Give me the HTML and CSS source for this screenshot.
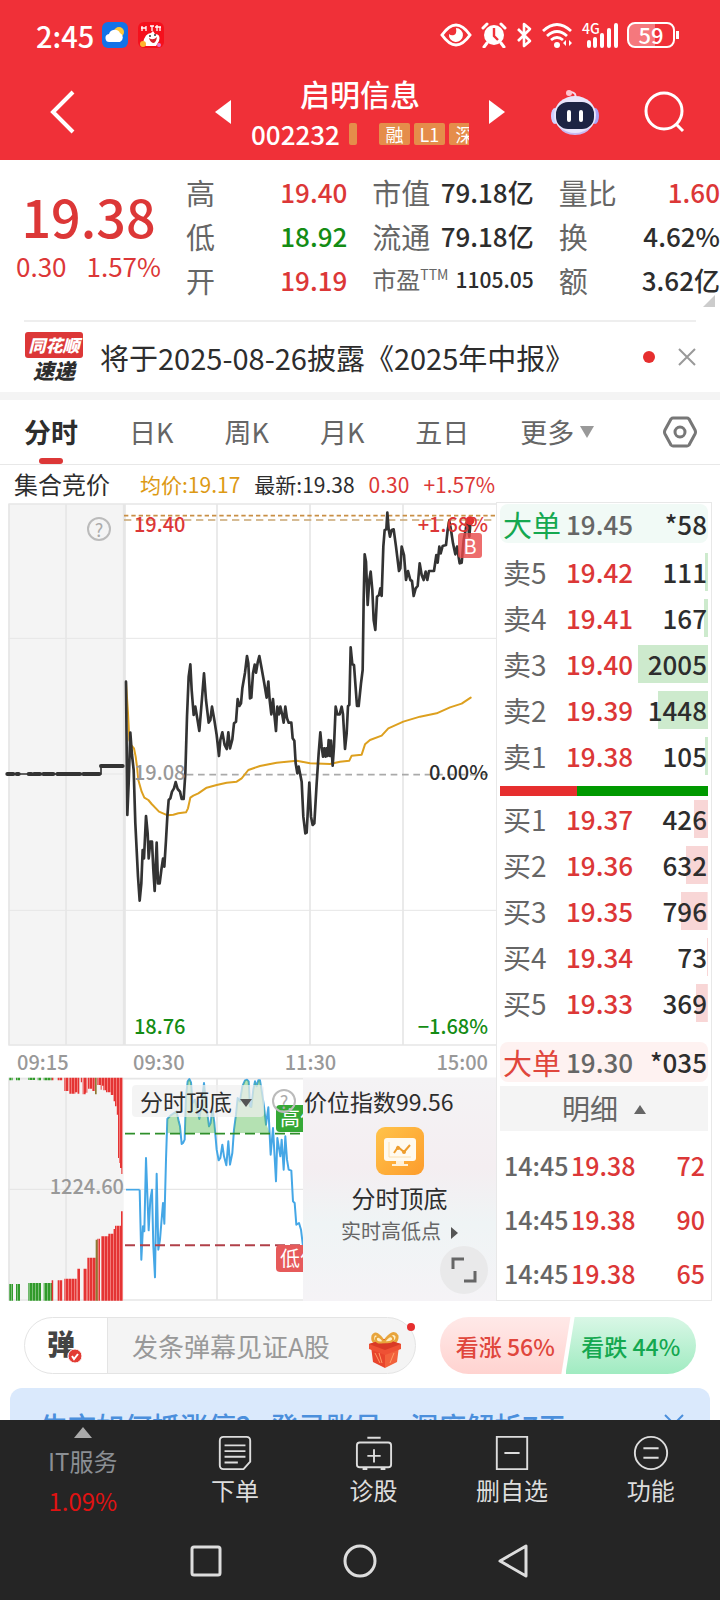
FILE: index.html
```html
<!DOCTYPE html>
<html lang="zh-CN">
<head>
    <meta charset="UTF-8">
    <meta name="viewport" content="width=device-width, initial-scale=1.0">
    <title>启明信息 002232</title>
    <link rel="stylesheet" href="styles.css">
</head>

<body>
    <div class="content">
        <div class="statusbar">
            <span class="clock">2:45</span>
            <svg class="app_icon" viewBox="0 0 26 26">
                <rect width="26" height="26" rx="6" fill="#1372e8"/>
                <circle cx="17" cy="10" r="5" fill="#ffc83a"/>
                <path d="M8 20a4 4 0 0 1-1-8 6 6 0 0 1 11-1 5 5 0 0 1 0 9z" fill="#fff"/>
            </svg>
            <svg class="app_icon" viewBox="0 0 26 26">
                <rect width="26" height="26" rx="6" fill="#f5101c"/>
                <path d="M4 4v5M3 6h5M8 4v5M12 4h4M14 4v5M19 3v6M17 5h6M22 5v4" stroke="#fff" stroke-width="1.3" fill="none"/>
                <path d="M5 21q2-10 8-10l2-2 2 3q6 0 4 7l-3 5H8z" fill="#fff"/>
                <path d="M11 16q4 3 8-1-1 6-4 6-3-1-4-5z" fill="#d3202b"/>
                <circle cx="12" cy="14" r="1" fill="#333"/><circle cx="17" cy="13" r="1" fill="#333"/>
                <circle cx="5" cy="22" r="3" fill="#ffb52e"/><circle cx="21" cy="23" r="2" fill="#e37ad0"/>
            </svg>
            <div class="status_icons">
                <svg width="32" height="24" viewBox="0 0 32 24">
                    <path d="M2 12Q16-8 30 12 16 32 2 12z" fill="none" stroke="#fff" stroke-width="3"/>
                    <path d="M16 5a7 7 0 1 1-7 6q2 2 5 1t2-7z" fill="#fff"/>
                </svg>
                <svg width="26" height="26" viewBox="0 0 26 26">
                    <circle cx="13" cy="13" r="10" fill="#fff"/>
                    <path d="M2 6l4-4M24 6l-4-4M6 21l-3 4M20 21l3 4" stroke="#fff" stroke-width="3" stroke-linecap="round"/>
                    <path d="M13 6v8l4 4" fill="none" stroke="#f03038" stroke-width="2.4"/>
                </svg>
                <svg width="16" height="26" viewBox="0 0 16 26">
                    <path d="M2 7l12 12-6 5V2l6 5L2 19" fill="none" stroke="#fff" stroke-width="2.6" stroke-linejoin="round"/>
                </svg>
                <svg width="32" height="26" viewBox="0 0 32 26">
                    <path d="M2 9q14-13 28 0M6 14q10-9 20 0M10 18q6-5 12 0" fill="none" stroke="#fff" stroke-width="2.8"/>
                    <circle cx="16" cy="23" r="3" fill="#fff"/>
                    <path d="M25 18v6l-3-3zM28 18v6l3-3z" fill="#fff"/>
                </svg>
                <div class="signal">
                    <span>4G</span>
                    <svg width="31" height="26" viewBox="0 0 31 26">
                        <path d="M2 20v4M8 17v7M15 13v11M22 8v16M29 3v21" stroke="#fff" stroke-width="4" stroke-linecap="round"/>
                    </svg>
                </div>
                <span class="battery">59</span>
            </div>
        </div>

        <header class="header">
            <button class="back" aria-label="返回">
                <svg width="26" height="44" viewBox="0 0 26 44"><path d="M23 2L3 22l20 20" fill="none" stroke="#fff" stroke-width="4"/></svg>
            </button>
            <div class="stock">
                <button aria-label="上一只"><svg width="16" height="24" viewBox="0 0 16 24"><path d="M16 0v24L0 12z" fill="#fff"/></svg></button>
                <div class="stock_name">
                    <h1>启明信息</h1>
                    <div class="code">
                        <span>002232</span>
                        <div class="tags">
                            <i class="tag_end"></i>
                            <i class="tag">融</i><i class="tag">L1</i><i class="tag">深</i>
                        </div>
                    </div>
                </div>
                <button aria-label="下一只"><svg width="16" height="24" viewBox="0 0 16 24"><path d="M0 0v24l16-12z" fill="#fff"/></svg></button>
            </div>
            <div class="header_right">
                <button aria-label="智能助手">
                    <svg width="48" height="46" viewBox="0 0 48 46">
                        <path d="M24 9q2-5-4-6" fill="none" stroke="#f4d9ee" stroke-width="2"/>
                        <circle cx="18" cy="4" r="3" fill="#ffc4cf"/>
                        <ellipse cx="4" cy="27" rx="4" ry="8" fill="#cfd0ff"/>
                        <ellipse cx="44" cy="27" rx="4" ry="8" fill="#a9a4f5"/>
                        <ellipse cx="24" cy="26" rx="21" ry="19" fill="#e9e6fb"/>
                        <path d="M8 38q16 12 32 0-5 8-16 8T8 38z" fill="#c8b9f2"/>
                        <rect x="5" y="13" width="38" height="27" rx="12" fill="#1d2444"/>
                        <path d="M18 23v8M30 23v8" stroke="#fff" stroke-width="4" stroke-linecap="round"/>
                    </svg>
                </button>
                <button aria-label="搜索">
                    <svg width="42" height="42" viewBox="0 0 42 42">
                        <circle cx="21" cy="20" r="18" fill="none" stroke="#fff" stroke-width="3"/>
                        <path d="M33 33l7 7" stroke="#fff" stroke-width="3"/>
                    </svg>
                </button>
            </div>
        </header>

        <section class="quote">
            <div class="price">
                <strong>19.38</strong>
                <div><span>0.30</span><span>1.57%</span></div>
            </div>
            <dl>
                <div><dt>高</dt><dd class="red">19.40</dd></div>
                <div><dt>低</dt><dd class="green">18.92</dd></div>
                <div><dt>开</dt><dd class="red">19.19</dd></div>
            </dl>
            <dl>
                <div><dt>市值</dt><dd>79.18亿</dd></div>
                <div><dt>流通</dt><dd>79.18亿</dd></div>
                <div class="small"><dt>市盈<sup>TTM</sup></dt><dd>1105.05</dd></div>
            </dl>
            <dl>
                <div><dt>量比</dt><dd class="red">1.60</dd></div>
                <div><dt>换</dt><dd>4.62%</dd></div>
                <div><dt>额</dt><dd>3.62亿</dd></div>
            </dl>
        </section>

        <section class="news">
            <div class="news_logo"><b>同花顺</b><span>速递</span></div>
            <a href="#">将于2025-08-26披露《2025年中报》</a>
            <i class="news_dot"></i>
            <button aria-label="关闭">
                <svg width="18" height="18" viewBox="0 0 18 18"><path d="M1 1l16 16M17 1L1 17" stroke="#999" stroke-width="2"/></svg>
            </button>
        </section>

        <nav class="tabs">
            <button class="active">分时</button>
            <button>日K</button>
            <button>周K</button>
            <button>月K</button>
            <button>五日</button>
            <button class="more">更多</button>
            <button class="setting" aria-label="设置">
                <svg width="34" height="32" viewBox="0 0 34 32">
                    <path d="M10 2h14q1 0 2 1l6 11q1 2 0 4l-6 11q-1 1-2 1H10q-1 0-2-1L2 18q-1-2 0-4L8 3q1-1 2-1z" fill="none" stroke="#777" stroke-width="3"/>
                    <circle cx="17" cy="16" r="5" fill="none" stroke="#777" stroke-width="3"/>
                </svg>
            </button>
        </nav>

        <main class="main">
            <div class="chart_col">
                <div class="chart_info">
                    <b>集合竞价</b>
                    <span class="gold">均价:19.17</span>
                    <span>最新:19.38</span>
                    <span class="red">0.30</span>
                    <span class="red">+1.57%</span>
                </div>

                <div class="chart">
                    <svg viewBox="0 6 1488 1632" preserveAspectRatio="none">
                        <rect x="25" y="12" width="346" height="1624" fill="#f4f4f4"/>
                        <g stroke="#e6e6e6" stroke-width="5" fill="none">
                            <path d="M25 12H1488M25 1635H1488M27 12V1635M198 12V1635M651 12V1635M930 12V1635M1209 12V1635"/>
                            <path d="M373 12V1635" stroke-width="9"/>
                            <path d="M25 415H1488M25 822H372M25 1231H1488" stroke-width="3"/>
                        </g>
                        <path d="M372 47H1488" stroke="#c98f45" stroke-width="5" stroke-dasharray="13 9"/>
                        <path d="M372 60H1488" stroke="#c9a673" stroke-width="5" stroke-dasharray="22 14"/>
                        <path d="M560 824H1470" stroke="#aaa" stroke-width="5" stroke-dasharray="20 14"/>
                        <!-- 集合竞价 -->
                        <path d="M22 822H303V798H370" fill="none" stroke="#333" stroke-width="5"/>
                        <path d="M22 822H40M50 822H56M86 822H94M102 822H120M130 822H160M172 822H240M250 822H298M303 798H368" stroke="#333" stroke-width="12" stroke-linecap="round"/>
                        <!-- 均价 -->
                        <path d="M378 547L384 640 388 720 393 735 402 745 407 770 411 800 415 840 425 875 433 893 445 900 455 912 477 935 503 946 520 944 535 940 558 937 564 925 571 893 580 887 595 880 620 863 650 855 680 848 710 845 725 835 745 810 780 798 830 788 890 782 930 790 990 792 1020 785 1048 782 1055 767 1085 764 1095 733 1110 720 1145 707 1165 685 1210 665 1260 650 1310 640 1350 622 1385 611 1412 593" fill="none" stroke="#dda01f" stroke-width="6" stroke-linecap="round" stroke-linejoin="round"/>
                        <!-- 分时价 -->
                        <path d="M378 545L382 945 386 850 391 698 396 765 401 810 406 970 414 1130 419 1202 424 1150 428 1050 432 1075 438 948 443 1000 446 1075 451 1025 456 1025 460 1110 464 1173 467 1100 470 1028 474 1150 479 1150 484 1110 489 1076 493 1100 498 1020 502 950 506 900 511 895 516 875 522 865 527 846 533 867 540 875 545 897 551 897 556 820 561 650 566 530 571 493 575 570 581 645 586 620 591 650 598 693 604 620 612 520 618 600 626 668 631 660 636 620 643 660 650 705 657 768 661 720 667 697 674 735 680 747 685 697 690 745 697 718 702 670 708 665 713 597 718 618 723 610 727 565 735 518 741 468 745 490 750 595 754 593 759 520 764 494 768 518 773 488 778 468 784 500 792 545 800 593 805 545 809 600 814 643 819 597 823 643 828 693 832 620 837 643 841 620 847 645 851 668 856 620 861 655 866 668 874 668 878 715 883 722 887 790 892 820 896 800 901 825 905 845 910 950 916 1000 920 998 928 848 933 950 938 975 943 970 950 850 956 760 961 697 965 740 969 770 973 745 977 770 980 745 983 768 986 720 990 768 993 722 998 797 1002 740 1007 620 1012 643 1019 643 1025 620 1029 643 1035 747 1040 700 1044 618 1048 615 1052 442 1057 493 1062 495 1066 550 1071 618 1076 618 1083 550 1088 510 1091 300 1094 163 1098 185 1103 315 1108 240 1112 215 1117 270 1121 360 1126 390 1131 290 1137 285 1141 265 1145 288 1150 140 1154 90 1159 88 1162 38 1166 88 1170 110 1175 90 1181 88 1188 140 1197 213 1201 205 1205 140 1212 165 1218 240 1224 213 1231 240 1236 243 1241 288 1247 265 1253 258 1259 190 1265 225 1271 240 1277 215 1282 240 1287 213 1302 213 1309 165 1313 188 1318 140 1322 160 1328 138 1338 135 1343 90 1348 62 1353 90 1359 130 1366 163 1371 140 1379 190 1385 188 1391 120 1397 90 1402 60 1408 110 1412 60" fill="none" stroke="#333" stroke-width="8" stroke-linecap="round" stroke-linejoin="round"/>
                        <circle cx="1410" cy="62" r="13" fill="#e62e2e"/>
                    </svg>
                    <button class="help chart_help" aria-label="说明">?</button>
                    <span class="label top left red">19.40</span>
                    <span class="label top right red">+1.68%</span>
                    <span class="label mid left grey">19.08</span>
                    <span class="label mid right">0.00%</span>
                    <span class="label bottom left green">18.76</span>
                    <span class="label bottom right green">−1.68%</span>
                    <span class="buy_mark">B</span>
                </div>

                <div class="time_axis">
                    <span>09:15</span>
                    <span>09:30</span>
                    <span>11:30</span>
                    <span>15:00</span>
                </div>

                <div class="sub">
                    <svg viewBox="0 52 1488 672" preserveAspectRatio="none">
                        <defs>
                            <pattern id="redBar" width="9" height="9" patternUnits="userSpaceOnUse"><path d="M0 0h9v9H0z" fill="#f27a78"/><path d="M0 0h6v9H0z" fill="#e43434"/></pattern>
                            <pattern id="greenBar" width="9" height="9" patternUnits="userSpaceOnUse"><path d="M0 0h9v9H0z" fill="#7cc077"/><path d="M0 0h6v9H0z" fill="#319a2b"/></pattern>
                            <clipPath id="above"><path d="M372 52H909V221H372z"/></clipPath>
                            <clipPath id="plot"><path d="M372 52H909V724H372z"/></clipPath>
                        </defs>
                        <rect x="25" y="54" width="346" height="669" fill="#f4f4f4"/>
                        <g stroke="#e6e6e6" stroke-width="5" fill="none">
                            <path d="M25 57H1488M25 721H1488M27 54V721M198 54V721M651 54V721"/>
                            <path d="M25 389H1488" stroke-width="4"/>
                        </g>
                        <path d="M28 54h10v8H28zM48 54h12v8H48zM85 54h20v7H85zM113 54h10v8h-10zM131 54h24v8h-24zM28 673h11v50H28zM48 673h12v50H48zM85 670h38v53H85zM131 670h25v53h-25z" fill="url(#greenBar)"/>
                        <path d="M155 54h6v8h-6zM173 54h14v8h-14zM193 54h13v40h-13zM208 54h30v48h-6v-4h-6v4h-18zM242 54h4v14h-4zM248 54h14v45h-5v5h-9zM264 54h20v40h-8v-7h-12zM292 54H368V343H364V325H360V310H357V295H354V165H350V140H345V125H340V106H332V98H318V92H310V78H306V90H302V76H292z" fill="url(#redBar)"/>
                        <path d="M155 662h5v61h-5zM173 662h14v61h-14zM193 657h37v66h-37zM231 627h9v96h-9zM250 627h11v96h-11zM262 594h26v129h-26zM292 537h8v186h-8zM303 530H325V522H340V508H345V498H363V455H369V723H303z" fill="url(#redBar)"/>
                        <path d="M285 54h5v50h-5zM287 540h6v183h-6z" fill="#8c7a33"/>
                        <g clip-path="url(#plot)">
                            <path d="M419 390L424 600 429 500 433 515 438 295 446 512 451 420 456 390 460 560 465 653 470 342 475 570 480 540 484 490 489 430 493 492 498 300 502 178 512 167 530 155 536 185 540 200 545 253 549 250 554 240 558 110 563 65 568 58 573 68 578 130 585 120 592 150 598 178 605 130 612 70 618 130 627 200 632 190 637 143 643 190 650 270 656 302 661 295 667 255 672 290 679 317 685 245 690 315 697 280 702 210 708 165 713 115 720 125 727 80 735 62 741 60 746 65 750 140 754 142 760 90 765 65 770 80 775 62 780 62 786 100 792 140 798 195 805 143 812 285 819 205 828 365 832 235 841 290 845 240 851 330 856 230 861 300 866 330 874 333 879 425 884 430 889 495 897 490 903 510 909 560" fill="none" stroke="#45a7e6" stroke-width="6" stroke-linejoin="round"/>
                            <path d="M502 221V178L512 167 530 155 536 185 543 221H554L558 110 563 65 568 58 573 68 578 130 585 120 592 150 598 178 605 130 612 70 618 130 627 200 632 190 637 143 643 190 648 221H701L708 165 713 115 720 125 727 80 735 62 741 60 746 65 750 140 754 142 760 90 765 65 770 80 775 62 780 62 786 100 792 140 800 195 809 221z" fill="#58bd55" fill-opacity=".45" clip-path="url(#above)"/>
                        </g>
                        <path d="M378 390H419" stroke="#45a7e6" stroke-width="5"/>
                        <path d="M375 222H909" stroke="#2f8f2b" stroke-width="5" stroke-dasharray="30 15"/>
                        <path d="M375 557H909" stroke="#b04049" stroke-width="6" stroke-dasharray="30 15"/>
                    </svg>
                    <span class="volume">1224.60</span>
                    <span class="flag high">高位</span>
                    <span class="flag low">低位</span>
                    <div class="promo">
                        <svg width="48" height="48" viewBox="0 0 48 48">
                            <defs><linearGradient id="sun" x2="1" y2="1"><stop stop-color="#ffc34a"/><stop offset="1" stop-color="#fd9c2c"/></linearGradient></defs>
                            <rect width="48" height="48" rx="9" fill="url(#sun)"/>
                            <rect x="8" y="11" width="32" height="23" rx="3" fill="#fffaf0"/>
                            <path d="M20 34h8v3h4v2H16v-2h4z" fill="#fff1d8"/>
                            <path d="M13 15v15h22" fill="none" stroke="#fce0b0" stroke-width="1"/>
                            <path d="M18 26l4-6 6 5 6-7" fill="none" stroke="#ee9d2e" stroke-width="2"/>
                            <circle cx="22" cy="21" r="2" fill="#ee9d2e"/><circle cx="28" cy="25" r="2" fill="#ee9d2e"/>
                        </svg>
                        <b>分时顶底</b>
                        <a href="#">实时高低点</a>
                    </div>
                    <div class="sub_head">
                        <button class="sub_select">分时顶底</button>
                        <button class="help" aria-label="说明">?</button>
                        <span>价位指数99.56</span>
                    </div>
                    <button class="expand" aria-label="全屏">
                        <svg width="26" height="26" viewBox="0 0 26 26"><path d="M2 12V2h11M24 14v10H13" fill="none" stroke="#666" stroke-width="3"/></svg>
                    </button>
                </div>
            </div>

            <aside class="book">
                <div class="big sell"><b>大单</b><span>19.45</span><em>*58</em></div>
                <table class="sell">
                    <tr><th>卖5</th><td>19.42</td><td class="vol" style="--w: 4%">111</td></tr>
                    <tr><th>卖4</th><td>19.41</td><td class="vol" style="--w: 6%">167</td></tr>
                    <tr><th>卖3</th><td>19.40</td><td class="vol" style="--w: 95%">2005</td></tr>
                    <tr><th>卖2</th><td>19.39</td><td class="vol" style="--w: 68%">1448</td></tr>
                    <tr><th>卖1</th><td>19.38</td><td class="vol" style="--w: 4%">105</td></tr>
                </table>
                <div class="ratio"></div>
                <table class="buy">
                    <tr><th>买1</th><td>19.37</td><td class="vol" style="--w: 19%">426</td></tr>
                    <tr><th>买2</th><td>19.36</td><td class="vol" style="--w: 30%">632</td></tr>
                    <tr><th>买3</th><td>19.35</td><td class="vol" style="--w: 36%">796</td></tr>
                    <tr><th>买4</th><td>19.34</td><td class="vol" style="--w: 2%">73</td></tr>
                    <tr><th>买5</th><td>19.33</td><td class="vol" style="--w: 16%">369</td></tr>
                </table>
                <div class="big buy"><b>大单</b><span>19.30</span><em>*035</em></div>
                <button class="detail">明细</button>
                <table class="ticks">
                    <tr><th>14:45</th><td>19.38</td><td>72</td></tr>
                    <tr><th>14:45</th><td>19.38</td><td>90</td></tr>
                    <tr><th>14:45</th><td>19.38</td><td>65</td></tr>
                </table>
            </aside>
        </main>

        <section class="comment">
            <div class="comment_box">
                <button class="danmu" aria-label="弹幕开关">
                    <b>弹</b>
                    <svg width="16" height="16" viewBox="0 0 16 16"><circle cx="8" cy="8" r="7" fill="#e23b33" stroke="#fff"/><path d="M5 8l2 3 4-5" fill="none" stroke="#fff" stroke-width="2"/></svg>
                </button>
                <input type="text" aria-label="发弹幕" placeholder="发条弹幕见证A股">
                <svg class="gift" width="36" height="38" viewBox="0 0 36 38">
                    <path d="M17 11Q4 14 6 5q3-6 11 6 9-13 13-6 1 9-13 6z" fill="#fff0c8" stroke="#e8a53c" stroke-width="3"/>
                    <path d="M4 15l14 6v16L6 31z" fill="#e8452c"/>
                    <path d="M32 15l-14 6v16l12-6z" fill="#f2623c"/>
                    <path d="M2 13l16-5 16 5v5l-16 6-16-6z" fill="#ee5134"/>
                    <path d="M2 13l16-5 16 5-16 6z" fill="#d93a26"/>
                    <path d="M8 22l5 10M12 22l3 10M27 22l-4 10" stroke="#ff9c66" stroke-width="1"/>
                    <path d="M17 11Q8 13 9 7q3-4 8 4 6-9 9-4 1 5-9 4z" fill="#fff0c8" stroke="#e8a53c" stroke-width="2"/>
                </svg>
                <i class="dot"></i>
            </div>
            <div class="vote">
                <button class="up">看涨 56%</button>
                <button class="down">看跌 44%</button>
            </div>
        </section>

        <a class="banner" href="#">
            <span>牛市如何抓涨停？ 登录账号，深度解析7天&gt;&gt;</span>
            <svg width="20" height="20" viewBox="0 0 20 20"><path d="M1 1l18 18M19 1L1 19" stroke="#4b8fdc" stroke-width="2"/></svg>
        </a>
    </div>

    <footer class="footer">
        <nav class="toolbar">
            <a href="#" class="sector">
                <i></i>
                <span>IT服务</span>
                <em>1.09%</em>
            </a>
            <a href="#">
                <svg viewBox="0 0 40 40"><path d="M8 3h24q4 0 4 4v22l-7 8H8q-4 0-4-4V7q0-4 4-4zM9 12h22M9 18h22M9 24h22M9 30h14"/></svg>
                <span>下单</span>
            </a>
            <a href="#">
                <svg viewBox="0 0 40 40"><path d="M13 4h14M5 9h30q3 0 3 3v20q0 3-3 3H5q-3 0-3-3V12q0-3 3-3zM20 16v14M13 23h14M8 37h5M27 37h5"/></svg>
                <span>诊股</span>
            </a>
            <a href="#">
                <svg viewBox="0 0 40 40"><path d="M4 3h32v34H4zM12 20h16"/></svg>
                <span>删自选</span>
            </a>
            <a href="#">
                <svg viewBox="0 0 40 40"><circle cx="20" cy="20" r="17"/><path d="M12 15h16M12 25h16"/></svg>
                <span>功能</span>
            </a>
        </nav>
        <div class="system">
            <svg viewBox="0 0 36 36"><rect x="4" y="4" width="28" height="28" rx="2"/></svg>
            <svg viewBox="0 0 36 36"><circle cx="18" cy="18" r="15"/></svg>
            <svg viewBox="0 0 36 36"><path d="M30 3v30L4 18z"/></svg>
        </div>
    </footer>
</body>
</html>
```

FILE: styles.css
```css
:root {
    --red: #dc3737;
    --green: #148c14;
    --header: #f03038;
    --text: #2d2d2d;
    --grey: #666;
    --line: #e8e8e8;
}

* {
    box-sizing: border-box;
}

body {
    margin: 0;
    height: 100vh;
    display: flex;
    flex-direction: column;
    background-color: #fff;
    color: var(--text);
    font-family: "Noto Sans CJK SC", Roboto, sans-serif;
    font-size: 27px;
}

button {
    padding: 0;
    border: none;
    background: none;
    color: inherit;
    font: inherit;
    cursor: pointer;
}

a {
    color: inherit;
    text-decoration: none;
}

i, em {
    font-style: normal;
}

svg {
    display: block;
    flex-shrink: 0;
}

.red { color: var(--red); }
.green { color: var(--green); }
.gold { color: #dd9a14; }
.grey { color: #999; }

.content {
    flex: 1;
    min-height: 0;
    overflow: hidden;
}

/* status bar */
.statusbar {
    display: flex;
    align-items: center;
    height: 72px;
    padding: 0 45px 2px 36px;
    background-color: var(--header);
    color: #fff;
}

.clock {
    font-size: 29px;
    font-weight: 500;
    margin-right: 8px;
}

.app_icon {
    width: 26px;
    height: 26px;
    margin-right: 10px;
}

.status_icons {
    display: flex;
    align-items: center;
    gap: 9px;
    margin-left: auto;
}

.signal {
    position: relative;
    padding-left: 5px;
}

.signal span {
    position: absolute;
    top: -2px;
    left: 0;
    font-size: 14px;
    line-height: 16px;
    font-weight: 500;
}

.battery {
    position: relative;
    width: 48px;
    height: 26px;
    border: 2px solid #fff;
    border-radius: 8px;
    background: linear-gradient(90deg, rgba(255, 255, 255, .35) 60%, transparent 60%);
    font-size: 22px;
    line-height: 21px;
    font-weight: 500;
    text-align: center;
}

.battery::after {
    content: "";
    position: absolute;
    right: -6px;
    top: 7px;
    width: 3px;
    height: 8px;
    background-color: #fff;
}

/* header */
.header {
    display: grid;
    grid-template-columns: 1fr auto 1fr;
    align-items: center;
    height: 88px;
    padding: 0 35px 8px;
    background-color: var(--header);
    color: #fff;
}

.back {
    margin-left: 15px;
    justify-self: start;
}

.stock {
    display: flex;
    align-items: center;
    gap: 20px;
}

.stock_name {
    width: 218px;
}

.stock_name h1 {
    margin: 0 0 10px;
    font-size: 30px;
    line-height: 34px;
    font-weight: 500;
    text-align: center;
}

.code {
    display: flex;
    align-items: center;
    gap: 9px;
    font-size: 26px;
    line-height: 28px;
    font-weight: 500;
}

.tags {
    display: flex;
    flex: 1;
    gap: 4px;
    overflow: hidden;
}

.tag, .tag_end {
    flex: 0 0 31px;
    height: 22px;
    border-radius: 2px;
    background-color: #e58d4a;
    font-size: 18px;
    line-height: 22px;
    font-weight: 400;
    text-align: center;
}

.tag_end {
    flex-basis: 8px;
    margin-right: 18px;
}

.header_right {
    display: flex;
    align-items: center;
    justify-content: flex-end;
    gap: 44px;
}

/* quote */
.quote {
    position: relative;
    display: flex;
    gap: 25px;
    padding: 10px 0 18px;
}

.quote::after {
    content: "";
    position: absolute;
    right: 5px;
    bottom: 13px;
    border-left: 12px solid transparent;
    border-bottom: 12px solid #ccc;
}

.price {
    width: 161px;
    padding: 16px 0 0 16px;
    color: var(--red);
    text-align: center;
}

.price strong {
    display: block;
    font-size: 52px;
    line-height: 60px;
    font-weight: 500;
}

.price div {
    display: flex;
    justify-content: space-between;
    margin-top: 4px;
    font-size: 26px;
    line-height: 32px;
}

.quote dl {
    flex: 1;
    margin: 0;
}

.quote dl div {
    display: flex;
    justify-content: space-between;
    line-height: 44px;
    white-space: nowrap;
}

.quote dt {
    color: var(--grey);
    font-size: 29px;
}

.quote dd {
    margin: 0;
    font-size: 26px;
    font-weight: 500;
}

.quote .small {
    line-height: 42px;
}

.quote .small dt {
    font-size: 24px;
}

.quote .small dd {
    font-size: 21px;
}

.quote sup {
    font-size: 14px;
    line-height: 14px;
}

/* news */
.news {
    display: flex;
    align-items: center;
    height: 72px;
    margin: 0 24px;
    border-top: 2px solid #eee;
}

.news_logo {
    display: flex;
    flex-direction: column;
    align-items: center;
    width: 60px;
    margin-right: 16px;
    font-style: italic;
    font-weight: 900;
}

.news_logo b {
    width: 58px;
    border-radius: 3px;
    background-color: var(--red);
    color: #fff;
    font-size: 17px;
    line-height: 26px;
    text-align: center;
}

.news_logo span {
    font-size: 21px;
    line-height: 24px;
}

.news a {
    flex: 1;
    font-size: 29px;
    line-height: 36px;
    white-space: nowrap;
}

.news_dot {
    width: 12px;
    height: 12px;
    margin-right: 23px;
    border-radius: 50%;
    background-color: #e62e2e;
}

/* tabs */
.tabs {
    display: flex;
    align-items: center;
    gap: 51px;
    height: 73px;
    padding: 0 23px 0 24px;
    border-top: 8px solid #f4f4f4;
    border-bottom: 1px solid var(--line);
    color: var(--grey);
}

.tabs button {
    position: relative;
    line-height: 64px;
    white-space: nowrap;
}

.tabs .active {
    color: var(--text);
    font-weight: 700;
}

.tabs .active::after {
    content: "";
    position: absolute;
    left: 50%;
    bottom: 0;
    width: 24px;
    height: 6px;
    margin-left: -12px;
    border-radius: 3px;
    background-color: var(--red);
}

.more::after {
    content: "";
    display: inline-block;
    margin: 0 0 5px 6px;
    border: 7px solid transparent;
    border-top: 12px solid #999;
    border-bottom: none;
}

.tabs .setting {
    margin-left: auto;
}

/* chart */
.main {
    display: flex;
    margin-right: 8px;
}

.chart_col {
    flex: 1;
    min-width: 0;
}

.chart_info {
    display: flex;
    align-items: center;
    gap: 14px;
    height: 37px;
    padding-left: 14px;
    font-size: 21px;
    white-space: nowrap;
}

.chart_info b {
    margin-right: 16px;
    font-size: 24px;
    font-weight: 400;
}

.chart, .sub {
    position: relative;
}

.chart > svg {
    width: 100%;
    height: 544px;
}

.sub > svg {
    width: 100%;
    height: 224px;
}

.label {
    position: absolute;
    font-size: 20px;
    line-height: 24px;
    font-weight: 500;
}

.label.left { left: 27%; }
.label.right { right: 8px; }
.label.top { top: 10px; }
.label.mid { top: 258px; }
.label.bottom { bottom: 8px; }

.help {
    width: 24px;
    height: 24px;
    border: 2px solid #bbb;
    border-radius: 50%;
    color: #aaa;
    font-size: 18px;
    line-height: 20px;
}

.chart_help {
    position: absolute;
    top: 15px;
    left: 87px;
}

.buy_mark {
    position: absolute;
    top: 31px;
    right: 14px;
    width: 24px;
    height: 25px;
    border-radius: 3px;
    background-color: rgba(232, 72, 72, .8);
    color: #fff;
    font-size: 20px;
    line-height: 25px;
    text-align: center;
}

.time_axis {
    display: grid;
    grid-template-columns: 116px 1fr 1fr 1fr;
    height: 31px;
    padding: 0 8px 0 17px;
    color: #999;
    font-size: 20px;
    line-height: 32px;
    font-weight: 500;
}

.time_axis span:nth-child(3) { text-align: center; }
.time_axis span:last-child { text-align: right; }

/* sub chart */
.volume {
    position: absolute;
    top: 97px;
    right: 75%;
    color: #999;
    font-size: 20px;
    line-height: 24px;
    font-weight: 500;
}

.flag {
    position: absolute;
    left: 276px;
    width: 27px;
    height: 27px;
    padding-left: 4px;
    border-radius: 4px 0 0 4px;
    background-color: #35a835;
    color: #fff;
    font-size: 20px;
    line-height: 26px;
    white-space: nowrap;
    overflow: hidden;
}

.flag.high { top: 28px; }

.flag.low {
    top: 168px;
    background-color: #e65a5a;
}

.promo {
    position: absolute;
    top: 1px;
    right: 0;
    bottom: 0;
    width: 193px;
    display: flex;
    flex-direction: column;
    align-items: center;
    padding-top: 49px;
    background: linear-gradient(#f4f3f5, #f4eef1 40%, #eff4f5 65%, #f5f3f6);
}

.promo b {
    margin-top: 8px;
    font-size: 24px;
    line-height: 30px;
    font-weight: 400;
}

.promo a {
    margin-top: 4px;
    color: var(--grey);
    font-size: 20px;
    line-height: 28px;
}

.promo a::after {
    content: "";
    display: inline-block;
    margin-left: 10px;
    border: 6px solid transparent;
    border-left: 7px solid #555;
    border-right: none;
}

.sub_head {
    position: absolute;
    top: 8px;
    left: 132px;
    display: flex;
    align-items: center;
    gap: 8px;
    font-size: 23px;
    line-height: 32px;
    white-space: nowrap;
}

.sub_select {
    width: 132px;
    padding-left: 8px;
    border-radius: 4px;
    background-color: rgba(240, 240, 240, .7);
    text-align: left;
}

.sub_select::after {
    content: "";
    display: inline-block;
    margin: 0 0 4px 8px;
    border: 6px solid transparent;
    border-top: 8px solid #555;
    border-bottom: none;
}

.expand {
    position: absolute;
    right: 8px;
    bottom: 7px;
    display: grid;
    place-items: center;
    width: 48px;
    height: 48px;
    border-radius: 50%;
    background-color: #e9e9ea;
}

/* order book */
.book {
    width: 216px;
    margin-top: 37px;
    padding: 1px 3px 0;
    border: 1px solid var(--line);
}

.big {
    display: flex;
    align-items: center;
    height: 39px;
    padding: 0 1px 0 3px;
    border-radius: 8px;
    background-color: #f1faf6;
    font-size: 26px;
    line-height: 36px;
}

.big b {
    width: 63px;
    color: #14a850;
    font-size: 29px;
    font-weight: 400;
}

.big span {
    color: var(--grey);
    font-weight: 500;
}

.big em {
    margin-left: auto;
    font-weight: 500;
}

.big.buy {
    height: 40px;
    margin-top: 16px;
    background-color: #fef2f1;
}

.big.buy b {
    color: #e0463c;
}

.book table {
    width: 100%;
    table-layout: fixed;
    border-collapse: collapse;
    font-size: 26px;
}

.book tr {
    height: 46px;
}

.book th, .book td {
    padding: 0;
    line-height: 38px;
}

.book th {
    width: 66px;
    padding-left: 3px;
    color: var(--grey);
    font-size: 28px;
    font-weight: 400;
    text-align: left;
}

.book td {
    width: 68px;
    color: var(--red);
    font-weight: 500;
}

.book td:last-child {
    width: auto;
    padding-right: 1px;
    text-align: right;
}

.book .vol {
    color: var(--text);
    background: linear-gradient(#cdeacd, #cdeacd) right center / var(--w) 38px no-repeat;
}

table.sell {
    margin-top: 6px;
}

.buy .vol {
    background-image: linear-gradient(#f8d6d6, #f8d6d6);
}

.ratio {
    height: 10px;
    margin-top: 7px;
    background: linear-gradient(90deg, #e62e2e 37%, #009900 37%);
}

.detail {
    display: block;
    width: 100%;
    height: 45px;
    margin-top: 4px;
    background-color: #f4f4f4;
    color: var(--grey);
    font-size: 28px;
    line-height: 45px;
}

.detail::after {
    content: "";
    display: inline-block;
    margin: 0 0 6px 16px;
    border: 6px solid transparent;
    border-bottom: 9px solid #666;
    border-top: none;
}

.book .ticks {
    margin-top: 7px;
    font-size: 25px;
}

.ticks tr {
    height: 54px;
}

.book .ticks th {
    padding-left: 4px;
    width: 71px;
    font-size: 25px;
    font-weight: 500;
}

.book .ticks td:last-child {
    padding-right: 3px;
}

/* comment */
.comment {
    display: flex;
    gap: 24px;
    padding: 16px 24px 14px;
}

.comment_box {
    position: relative;
    flex: 1;
    min-width: 0;
    display: flex;
    align-items: center;
    height: 57px;
    border: 1px solid #e4e4e4;
    border-radius: 29px;
    background: linear-gradient(90deg, #fff 82px, #e4e4e4 82px, #e4e4e4 83px, #f4f4f4 83px);
}

.danmu {
    position: relative;
    width: 82px;
    color: #444;
    font-size: 28px;
    line-height: 40px;
    padding: 0 10px 5px 0;
}

.danmu b {
    font-weight: 900;
}

.danmu svg {
    position: absolute;
    right: 24px;
    bottom: 4px;
}

.comment input {
    flex: 1;
    min-width: 0;
    padding: 0 0 0 25px;
    border: none;
    outline: none;
    background: none;
    font: inherit;
    font-size: 26px;
}

.comment input::placeholder {
    color: #999;
}

.gift {
    margin: 8px 12px 0 0;
}

.dot {
    position: absolute;
    top: 5px;
    right: 0;
    width: 8px;
    height: 8px;
    border-radius: 50%;
    background-color: #e62e2e;
}

.vote {
    display: flex;
    flex: 0 0 256px;
    border-radius: 29px;
    overflow: hidden;
    font-size: 23px;
    font-weight: 500;
}

.vote button {
    flex: 1;
    white-space: nowrap;
}

.vote .up {
    background: linear-gradient(#ffe9e8, #ffd3d0);
    color: #e0463c;
    clip-path: polygon(0 0, 100% 0, 93% 100%, 0 100%);
}

.vote .down {
    margin-left: -5px;
    background: linear-gradient(#d9f7e6, #a0ebc1);
    color: #14a850;
    clip-path: polygon(7% 0, 100% 0, 100% 100%, 0 100%);
}

/* banner */
.banner {
    display: flex;
    justify-content: space-between;
    margin: 0 10px;
    padding: 20px 26px 22px 30px;
    border-radius: 12px;
    background-color: #dae9fc;
    color: #4b8fdc;
    font-size: 28px;
    line-height: 36px;
    font-weight: 500;
    white-space: nowrap;
}

.banner svg {
    margin-top: 6px;
}

/* footer */
.footer {
    background-color: #252525;
    color: #ddd;
    font-size: 24px;
}

.toolbar {
    display: flex;
    height: 106px;
}

.toolbar a {
    flex: 1;
    display: flex;
    flex-direction: column;
    align-items: center;
    padding-top: 13px;
    line-height: 34px;
}

.toolbar svg {
    width: 38px;
    height: 40px;
    fill: none;
    stroke: #ddd;
    stroke-width: 2;
}

.toolbar .sector {
    flex: 0 0 23%;
    padding-top: 7px;
    color: #8b8f94;
}

.sector i {
    border: 9px solid transparent;
    border-top: none;
    border-bottom: 11px solid #aaa;
}

.sector span {
    margin-top: 6px;
}

.sector em {
    margin-top: 6px;
    color: #e01212;
}

.system {
    display: flex;
    justify-content: center;
    gap: 118px;
    height: 74px;
    padding-top: 17px;
}

.system svg {
    width: 36px;
    height: 36px;
    fill: none;
    stroke: #ddd;
    stroke-width: 3;
    stroke-linejoin: round;
}
```
